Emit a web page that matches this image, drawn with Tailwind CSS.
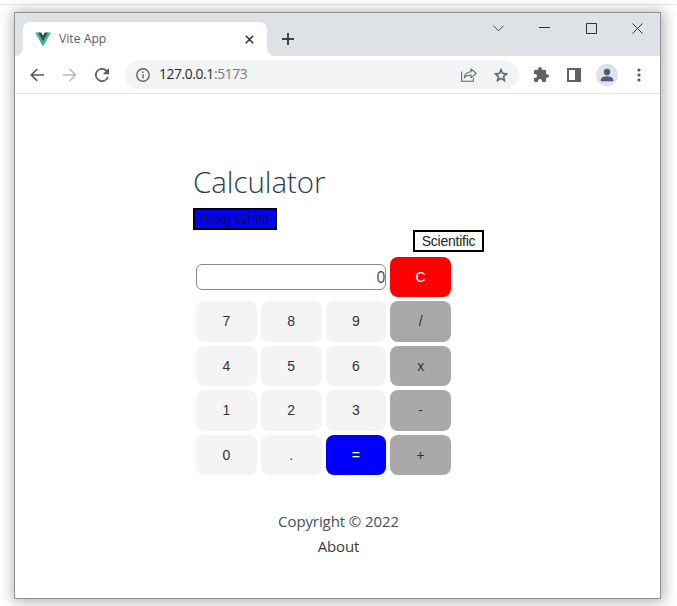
<!DOCTYPE html>
<html lang="en">
<head>
<meta charset="utf-8">
<title>Vite App</title>
<script src="https://cdn.jsdelivr.net/npm/@tailwindcss/browser@4"></script>
</head>
<body class="h-[606px] w-[677px] overflow-hidden bg-white font-['Open_Sans',sans-serif]">
<div class="h-[606px] w-[677px] overflow-hidden pt-1">
<div class="h-[602px] border-t border-[#e9e9e9] pt-[7px] pl-[14px]">
<div class="flex h-[587px] w-[647px] flex-col border border-[#929292] bg-white shadow-[1px_1px_13px_2px_rgba(0,0,0,0.3)]">
  <header class="flex h-[43px] shrink-0 bg-[#dee1e6]">
    <div class="relative ml-2 mt-[9px] flex h-[34px] w-[244px] items-center rounded-t-[7px] bg-white">
      <svg class="absolute bottom-0 -left-2 size-2" viewBox="0 0 8 8" fill="#fff"><path d="M8 0v8H0a8 8 0 0 0 8-8"/></svg>
      <svg class="absolute bottom-0 -right-2 size-2" viewBox="0 0 8 8" fill="#fff"><path d="M0 0v8h8a8 8 0 0 1-8-8"/></svg>
      <svg class="ml-[12px] h-[15px] w-4" viewBox="0 0 16 15"><path fill="#41b883" d="M0 .5h4.5L8 7l3.500-6.500H16L8 14.500z"/><path fill="#35495e" d="M3.200.5h3L8 3.500 9.800.5h3L8 9.200z"/></svg>
      <span class="ml-[8px] w-[170px] text-[12.2px] leading-4 text-[#5c6064]">Vite App</span>
      <svg class="ml-[16px] size-[9px]" viewBox="0 0 9 9" fill="none" stroke="#333" stroke-width="1.6"><path d="m.8.8 7.4 7.4M8.2.8.8 8.2"/></svg>
    </div>
    <svg class="ml-[15px] mt-[20px] size-3" viewBox="0 0 12 12" fill="none" stroke="#3b3e42" stroke-width="1.9"><path d="M6 0v12M0 6h12"/></svg>
    <div class="ml-[199px] mt-[9px] flex h-3 items-center">
      <svg class="h-[7px] w-[11px]" viewBox="0 0 11 7" fill="none" stroke="#444" stroke-width="1"><path d="m.5.8 5 5 5-5"/></svg>
      <svg class="ml-[35px] h-3 w-[11px]" viewBox="0 0 11 12" fill="none" stroke="#333"><path d="M0 5.500h11"/></svg>
      <svg class="ml-[36px] size-[11px]" viewBox="0 0 11 11" fill="none" stroke="#333"><path d="M.5.5h10v10H.5z"/></svg>
      <svg class="ml-[35px] size-[11px]" viewBox="0 0 11 11" fill="none" stroke="#333"><path d="m.5.5 10 10m0-10-10 10"/></svg>
    </div>
  </header>
  <div class="flex h-[38px] shrink-0 items-center border-b border-[#e2e3e5] bg-white pl-[15px] text-[#5f6368]">
    <svg class="size-[14px]" viewBox="0 0 14 14" fill="none" stroke="#55595e" stroke-width="1.7"><path d="M14 7H1.7M7.3 1 1.3 7l6 6"/></svg>
    <svg class="ml-[19px] size-[14px]" viewBox="0 0 14 14" fill="none" stroke="#b9bbbe" stroke-width="1.6"><path d="M0 7h12.3M6.7 1l6 6-6 6"/></svg>
    <svg class="ml-[18px] size-[14px]" viewBox="4 4 16 16" fill="#55595e"><path d="M17.65 6.35A8 8 0 1 0 19.73 14h-2.08A6 6 0 1 1 12 6c1.66 0 3.14.69 4.22 1.78L13 11h7V4z"/></svg>
    <div class="ml-[16px] flex h-7 w-[394px] items-center rounded-full bg-[#f1f3f4] pl-[11px]">
      <svg class="size-[14px]" viewBox="0 0 14 14" fill="none" stroke="#5f6368" stroke-width="1.4"><circle cx="7" cy="7" r="6.2"/><path d="M7 6.2v4M7 3.5V5"/></svg>
      <span class="ml-[9px] w-[290px] -translate-y-px text-[13.8px] leading-5 tracking-[-0.37px] text-[#77797d]"><span class="text-[#292b2e]">127.0.0.1</span>:5173</span>
      <svg class="ml-[12px] h-[14px] w-4" viewBox="0 0 16 14" fill="none" stroke="#64686c" stroke-width="1.1"><path d="M.6 3.500v9.800h11.800V10"/><path stroke-linejoin="round" d="M10 1v2.800C6 3.900 3.700 6.300 3.200 10 4.800 7.900 7 7 10 7v2.800l5.200-4.400z"/></svg>
      <svg class="ml-[17px] size-[14px]" viewBox="2 2 20 19" fill="#55595e" stroke="#55595e" stroke-width=".5"><path d="m22 9.24-7.19-.62L12 2 9.19 8.63 2 9.24l5.46 4.73L5.82 21 12 17.27 18.18 21l-1.63-7.03zM12 15.400l-3.760 2.270 1-4.280-3.320-2.880 4.380-.380L12 6.100l1.710 4.040 4.380.380-3.320 2.880 1 4.280z"/></svg>
    </div>
    <svg class="ml-[15px] size-[15px]" viewBox="2 1 21 21" fill="#5f6368"><path d="M20.500 11H19V7a2 2 0 0 0-2-2h-4V3.500a2.500 2.500 0 0 0-5 0V5H4a2 2 0 0 0-2 2v3.800h1.500a2.700 2.700 0 0 1 0 5.400H2V20c0 1.100.9 2 2 2h3.800v-1.500a2.700 2.700 0 0 1 5.400 0V22H17a2 2 0 0 0 2-2v-4h1.500a2.500 2.500 0 0 0 0-5"/></svg>
    <svg class="ml-[18px] size-[14px]" viewBox="0 0 14 14"><path fill="#5f6368" fill-rule="evenodd" d="M0 0h14v14H0zM2 2v10h6V2z"/></svg>
    <svg class="ml-[15px] size-[22px]" viewBox="0 0 22 22"><circle cx="11" cy="11" r="11" fill="#dee1e8"/><g fill="#4d5d75"><circle cx="11" cy="8" r="3.2"/><path d="M4.800 17.300v-1.600c0-2.300 4-3.400 6.200-3.400s6.200 1.100 6.200 3.400v1.600z"/></g></svg>
    <svg class="ml-[19px] h-[14px] w-1" viewBox="0 0 4 14" fill="#55595e"><circle cx="2" cy="2" r="1.600"/><circle cx="2" cy="7" r="1.600"/><circle cx="2" cy="12" r="1.600"/></svg>
  </div>
  <main class="ml-[178px] w-[291px] pt-[67px] text-[#2c3e50]">
    <h1 class="h-[47px] whitespace-nowrap text-[29.5px] leading-[42px] tracking-[-0.05px] font-[340] text-[#2c3e50]">Calculator</h1>
    <button class="flex h-[22px] w-[84px] items-center justify-center border-2 border-black bg-[#0000ff] pb-px font-['Liberation_Sans',sans-serif] text-[14px] leading-4 tracking-[-0.1px] whitespace-nowrap text-[#0c0c58]">Bckg White</button>
    <div class="flex justify-end"><button class="flex h-[22px] w-[71px] items-center justify-center border-2 border-black bg-white pb-px font-['Liberation_Sans',sans-serif] text-[14px] leading-4 tracking-[-0.25px] text-[#222]">Scientific</button></div>
    <div class="ml-[3px] mt-[5px] grid w-[255px] grid-cols-4 gap-x-[4px] gap-y-[4.2px] font-['Liberation_Sans',sans-serif] text-[14px] text-[#333] [&>button]:h-[40.3px] [&>button]:rounded-[8px]">
      <div class="col-span-3 flex h-[26px] items-center justify-end self-center rounded-[6px] border border-[#8a8a8a] bg-white font-['Open_Sans',sans-serif] text-[15.500px] text-[#444]">0</div>
      <button class="bg-[#ff0000] text-white">C</button>
      <button class="bg-[#f4f4f4]">7</button><button class="bg-[#f4f4f4]">8</button><button class="bg-[#f4f4f4]">9</button><button class="bg-[#a9a9a9]">/</button>
      <button class="bg-[#f4f4f4]">4</button><button class="bg-[#f4f4f4]">5</button><button class="bg-[#f4f4f4]">6</button><button class="bg-[#a9a9a9]">x</button>
      <button class="bg-[#f4f4f4]">1</button><button class="bg-[#f4f4f4]">2</button><button class="bg-[#f4f4f4]">3</button><button class="bg-[#a9a9a9]">-</button>
      <button class="bg-[#f4f4f4]">0</button><button class="bg-[#f4f4f4]">.</button><button class="bg-[#0000ff] text-white">=</button><button class="bg-[#a9a9a9]">+</button>
    </div>
    <footer class="mt-[34px] text-center text-[15px] leading-[24.5px] tracking-[-0.1px] text-[#42505e]"><p>Copyright © 2022</p><p class="text-[#3a3a3a]">About</p></footer>
  </main>
</div>
</div>
</div>
</body>
</html>
